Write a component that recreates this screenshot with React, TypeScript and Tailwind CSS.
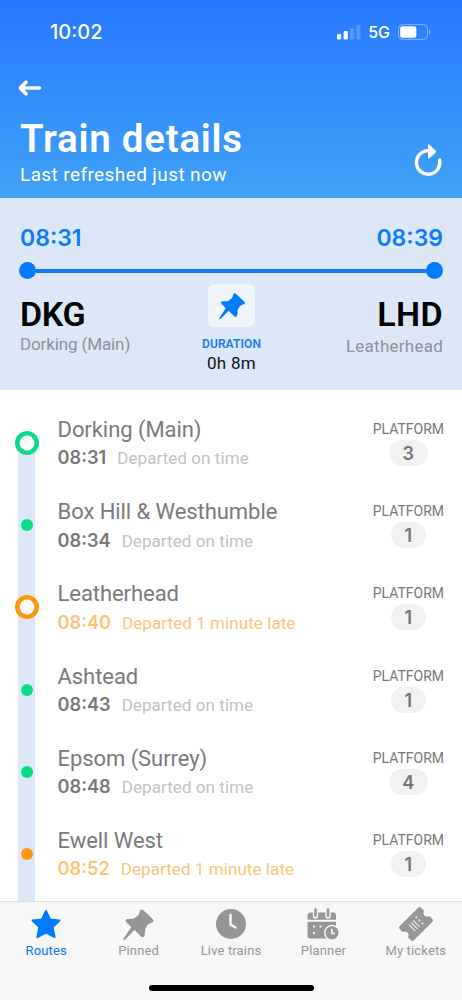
import type { ReactNode } from "react"

type Stop = {
    name: string
    time: string
    status: string
    platform: number
    late?: boolean
    main?: boolean
}

const stops: Stop[] = [
    { name: "Dorking (Main)", time: "08:31", status: "Departed on time", platform: 3, main: true },
    { name: "Box Hill & Westhumble", time: "08:34", status: "Departed on time", platform: 1 },
    { name: "Leatherhead", time: "08:40", status: "Departed 1 minute late", platform: 1, late: true, main: true },
    { name: "Ashtead", time: "08:43", status: "Departed on time", platform: 1 },
    { name: "Epsom (Surrey)", time: "08:48", status: "Departed on time", platform: 4 },
    { name: "Ewell West", time: "08:52", status: "Departed 1 minute late", platform: 1, late: true },
]

function Pin({ className }: { className: string }) {
    return (
        <svg viewBox="366 36 100 100" className={className} fill="currentColor">
            <path d="M430 42 L460 71 Q465 77 458 80 Q448 82 444 87 L437 98 Q436 108 435 117 Q432 129 424 123 L404 103 L375 132 Q371 134 370 130 L394 94 L380 80 Q373 71 382 69 Q394 70 402 68 L416 57 Q419 53 420 46 Q423 37 430 42 Z" />
        </svg>
    )
}

function StatusBar() {
    return (
        <div className="flex h-[63px] items-center justify-between pl-[50px] pr-[31px]">
            <span className="font-['Inter',sans-serif] text-[20px] font-medium leading-none">10:02</span>
            <div className="flex items-center">
                <svg viewBox="0 0 24 16" className="h-4 w-6" fill="currentColor">
                    <rect x="0" y="10" width="4.2" height="5.6" rx="1.4" />
                    <rect x="6.6" y="7" width="4.2" height="8.6" rx="1.4" />
                    <rect x="13" y="4" width="4.2" height="11.6" rx="1.4" opacity="0.2" />
                    <rect x="19.4" y="0.8" width="4.2" height="14.8" rx="1.4" opacity="0.2" />
                </svg>
                <span className="ml-[7px] font-['Inter',sans-serif] text-[16px] font-medium leading-none">5G</span>
                <svg viewBox="0 0 33 16" className="ml-2 h-4 w-[33px]" fill="none">
                    <rect x="0.6" y="0.6" width="28.8" height="14.8" rx="4" stroke="white" strokeOpacity="0.4" />
                    <rect x="2.2" y="2.3" width="16.2" height="11.4" rx="2" fill="white" />
                    <path d="M31 5.5 Q33.4 8 31 10.5 Z" fill="white" fillOpacity="0.5" />
                </svg>
            </div>
        </div>
    )
}

function Header() {
    return (
        <div className="h-[198px] shrink-0 bg-gradient-to-b from-[#2878ff] to-[#41a2f6] text-white">
            <StatusBar />
            <div className="flex h-[50px] items-center pl-[17px]">
                <svg viewBox="0 0 25 18" className="h-[18px] w-[25px]" fill="none" stroke="currentColor" strokeWidth="3.6" strokeLinecap="round" strokeLinejoin="round">
                    <path d="M22.5 9 H3.5 M9 3.2 L3.2 9 L9 14.8" />
                </svg>
            </div>
            <div className="flex justify-between pl-5 pr-[18px]">
                <div>
                    <h1 className="text-[38.5px] font-semibold leading-[52px] tracking-[0.75px]">Train details</h1>
                    <p className="text-[19px] leading-[19px] tracking-[0.4px]">Last refreshed just now</p>
                </div>
                <svg viewBox="0 0 32 36" className="mt-[29px] h-9 w-8" fill="none">
                    <path d="M16 8.8 A11.7 11.7 0 1 0 27.6 18" stroke="currentColor" strokeWidth="3.4" strokeLinecap="round" />
                    <path d="M16 3.5 Q16 1.5 17.8 2.9 L23.6 8.6 Q24.4 9.6 23.6 10.4 L17.8 16 Q16 17.4 16 15.4 Z" fill="currentColor" />
                </svg>
            </div>
        </div>
    )
}

function Summary() {
    return (
        <div className="h-[192px] shrink-0 bg-[#dce8f7] px-[19px] pt-[25px]">
            <div className="flex justify-between pl-px font-['Inter',sans-serif] text-[23px] font-semibold leading-[30px] text-[#0a7bfa]">
                <span>08:31</span>
                <span>08:39</span>
            </div>
            <div className="mt-[9px] flex items-center">
                <div className="size-[17px] rounded-full bg-[#007aff]"></div>
                <div className="h-1 flex-1 bg-[#1179f2]"></div>
                <div className="size-[17px] rounded-full bg-[#007aff]"></div>
            </div>
            <div className="grid grid-cols-3 pl-px">
                <div className="pt-5">
                    <div className="text-[34px] font-semibold leading-[30px] tracking-[-0.3px] text-black">DKG</div>
                    <div className="mt-[5px] text-[17px] leading-5 tracking-[-0.12px] text-[#8b909a]">Dorking (Main)</div>
                </div>
                <div className="flex flex-col items-center pt-[5px]">
                    <div className="flex h-[43px] w-[47px] items-center justify-center rounded-md bg-[#eff5fc]">
                        <Pin className="size-[28px] text-[#007aff]" />
                    </div>
                    <div className="mt-[9px] text-[12px] font-semibold leading-4 tracking-[0.1px] text-[#1a7bf2]">DURATION</div>
                    <div className="mt-px text-[17px] leading-5 tracking-[0.3px] text-[#0c1016]">0h 8m</div>
                </div>
                <div className="pt-5 text-right">
                    <div className="text-[34px] font-semibold leading-[30px] tracking-[0.4px] text-black">LHD</div>
                    <div className="mt-[7px] text-[17px] leading-5 tracking-[0.25px] text-[#8b909a]">Leatherhead</div>
                </div>
            </div>
        </div>
    )
}

function StopRow({ stop, first }: { stop: Stop; first: boolean }) {
    const color = stop.late ? "text-[#fb960e]" : "text-[#0adb8b]"
    return (
        <div className="flex h-[82.2px] shrink-0">
            <div className={"relative ml-[18px] w-[17px] bg-[#dce8f8] " + (first ? "mt-[41px]" : "")}>
                <svg viewBox="0 0 24 24" className={"absolute -left-[3.5px] size-6 " + color + (first ? " -top-3" : " top-[29px]")}>
                    {stop.main
                        ? <circle cx="12" cy="12" r="9.7" fill="white" stroke="currentColor" strokeWidth="4.6" />
                        : <circle cx="12" cy="12" r="6" fill="currentColor" />}
                </svg>
            </div>
            <div className="ml-[22.5px] flex-1 pt-[14px]">
                <div className="text-[22px] leading-7 tracking-[-0.06px] text-[#7a7a7a]">{stop.name}</div>
                <div className={"mt-[2.4px] flex items-baseline gap-[11px] leading-[22px] " + (stop.late ? "text-[#fac479]" : "")}>
                    <span className={"font-['Inter',sans-serif] text-[18.2px] font-semibold " + (stop.late ? "" : "text-[#787878]")}>{stop.time}</span>
                    <span className={"text-[17px] tracking-[0.07px] " + (stop.late ? "" : "text-[#c2c2c2]")}>{stop.status}</span>
                </div>
            </div>
            <div className="mr-[18px] flex flex-col items-center pt-[17px]">
                <div className="text-[14px] leading-5 text-[#777777]">PLATFORM</div>
                <div className="mt-px h-[26px] rounded-full bg-[#f1f1f4] px-[13.5px] text-center font-['Inter',sans-serif] text-[18px] font-semibold leading-[27px] text-[#757575]">{stop.platform}</div>
            </div>
        </div>
    )
}

function Tab({ label, active, children }: { label: string; active?: boolean; children: ReactNode }) {
    return (
        <div className={"flex flex-1 flex-col items-center pt-1 " + (active ? "text-[#007aff]" : "text-[#969696]")}>
            <div className="flex h-9 items-center">{children}</div>
            <span className="mt-px text-[13px] leading-4 tracking-[0.15px]">{label}</span>
        </div>
    )
}

function TabBar() {
    return (
        <div className="h-[99px] shrink-0 border-t border-[#dfdfe0] bg-[#f7f7f7]">
            <div className="flex">
                <Tab label="Routes" active>
                    <svg viewBox="0 0 32 32" className="size-8" fill="currentColor" stroke="currentColor" strokeWidth="2" strokeLinejoin="round">
                        <path d="M16 3 L20.1 11.5 L29.5 12.6 L22.6 19 L24.6 29 L16 24.6 L7.4 29 L9.4 19 L2.5 12.6 L11.9 11.5 Z" />
                    </svg>
                </Tab>
                <Tab label="Pinned">
                    <Pin className="size-[33px]" />
                </Tab>
                <Tab label="Live trains">
                    <svg viewBox="0 0 32 32" className="size-8" fill="currentColor">
                        <circle cx="16" cy="16" r="15" />
                        <path d="M15.5 7 V16.5 L20.5 19.5" fill="none" stroke="#f7f7f7" strokeWidth="2.6" strokeLinecap="round" strokeLinejoin="round" />
                    </svg>
                </Tab>
                <Tab label="Planner">
                    <svg viewBox="0 0 34 34" className="size-[34px]" fill="currentColor">
                        <path d="M5 5.5 H27 Q30 5.5 30 8.5 V12.8 H1.5 V8.5 Q1.5 5.5 5 5.5 Z" />
                        <path d="M1.5 14.8 H30 V29 Q30 31.5 27 31.5 H4.5 Q1.5 31.5 1.5 29 Z" />
                        <path d="M9.5 3.5 V9 M22 3.5 V9" stroke="#f7f7f7" strokeWidth="5.4" strokeLinecap="round" />
                        <path d="M9.5 2.6 V8.6 M22 2.6 V8.6" stroke="currentColor" strokeWidth="2.6" strokeLinecap="round" />
                        <path d="M7 18.5h2v2h-2zM13.5 18.5h2v2h-2zM7 25h2v2h-2z" fill="#f7f7f7" />
                        <circle cx="26" cy="25.8" r="8" fill="#f7f7f7" />
                        <circle cx="26" cy="25.8" r="6.5" />
                        <path d="M25.8 21.8 V26.3 H29" fill="none" stroke="#f7f7f7" strokeWidth="1.7" />
                    </svg>
                </Tab>
                <Tab label="My tickets">
                    <svg viewBox="0 0 34 34" className="size-[34px]" fill="currentColor">
                        <g transform="rotate(-45 17 17)">
                            <path d="M4 7 H30 Q32 7 32 9 V13.4 A3.7 3.7 0 0 0 32 20.6 V25 Q32 27 30 27 H4 Q2 27 2 25 V20.6 A3.7 3.7 0 0 0 2 13.4 V9 Q2 7 4 7 Z" />
                            <path d="M11.5 12.5 V21.5 M14.5 12.5 V21.5 M17.5 12.5 V21.5" stroke="#f7f7f7" strokeWidth="1.1" />
                            <path d="M22 11.5 V22.5" stroke="#f7f7f7" strokeWidth="1.6" strokeDasharray="1.8 2.6" />
                        </g>
                    </svg>
                </Tab>
            </div>
            <div className="mx-auto mt-[26px] h-[6px] w-[165px] rounded-full bg-black"></div>
        </div>
    )
}

export default function App() {
    return (
        <div className="flex h-[1000px] w-[462px] flex-col overflow-hidden bg-white font-['Roboto',sans-serif]">
            <Header />
            <Summary />
            <div className="flex min-h-0 flex-1 flex-col overflow-hidden pt-3">
                {stops.map((stop, i) => (
                    <StopRow key={stop.name} stop={stop} first={i === 0} />
                ))}
                <div className="ml-[18px] w-[17px] flex-1 bg-[#dce8f8]"></div>
            </div>
            <TabBar />
        </div>
    )
}
